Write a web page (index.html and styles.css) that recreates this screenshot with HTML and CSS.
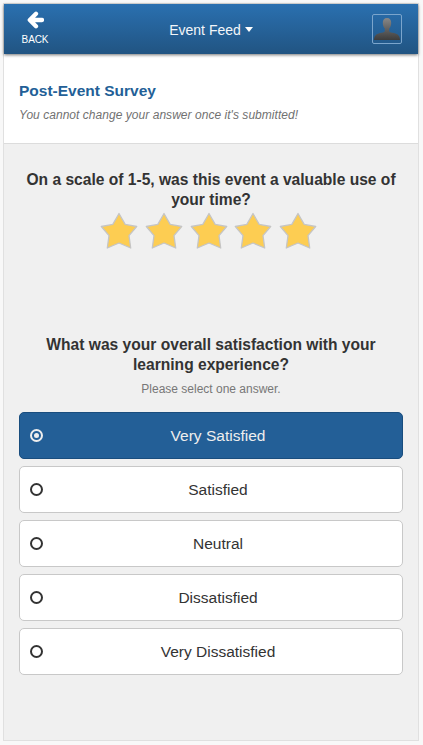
FILE: index.html
```
<!DOCTYPE html>
<html lang="en">
<head>
<meta charset="utf-8">
<title>Post-Event Survey</title>
<link rel="stylesheet" href="styles.css">
</head>
<body>
<div class="app">
  <header class="topbar">
    <a class="back">
      <svg width="17" height="18" viewBox="0 0 17 18"><path d="M9 2.800 2.800 9 9 15.200M4 9h11" fill="none" stroke="#fff" stroke-width="4.300" stroke-linecap="round" stroke-linejoin="round"/></svg>
      <span>BACK</span>
    </a>
    <div class="feed"><span>Event Feed</span><i class="caret"></i></div>
    <div class="avatar">
      <svg width="28" height="28" viewBox="0 0 28 28">
        <defs><linearGradient id="person" x1="0" y1="3" x2="0" y2="25" gradientUnits="userSpaceOnUse"><stop offset="0" stop-color="#888"/><stop offset="1" stop-color="#3c3c3c"/></linearGradient></defs>
        <path fill="url(#person)" d="M14 3c-3 0-4.300 2-4.200 5 .1 2.500.8 4.200 2 5.500v2.700c-.8 1.300-2.300 1.200-4.800 1.700C3 18.800 1 21 1 25h26c0-4-2-6.200-6-7.100-2.500-.5-4-.4-4.800-1.700v-2.700c1.200-1.300 1.900-3 2-5.500.1-3-1.200-5-4.200-5z"/>
      </svg>
    </div>
  </header>
  <section class="intro">
    <h1>Post-Event Survey</h1>
    <p>You cannot change your answer once it's submitted!</p>
  </section>
  <main class="survey">
    <section class="question rating">
      <h2>On a scale of 1-5, was this event a valuable use of<br>your time?</h2>
      <div class="stars">
        <svg class="star" viewBox="0 0 40 40"><path d="M20 2.500 26.200 13.400 37.700 15.500 30 24.600 31.700 37 20 32 8.300 37 10 24.600 2.300 15.500 13.800 13.400z"/></svg>
        <svg class="star" viewBox="0 0 40 40"><path d="M20 2.500 26.200 13.400 37.700 15.500 30 24.600 31.700 37 20 32 8.300 37 10 24.600 2.300 15.500 13.800 13.400z"/></svg>
        <svg class="star" viewBox="0 0 40 40"><path d="M20 2.500 26.200 13.400 37.700 15.500 30 24.600 31.700 37 20 32 8.300 37 10 24.600 2.300 15.500 13.800 13.400z"/></svg>
        <svg class="star" viewBox="0 0 40 40"><path d="M20 2.500 26.200 13.400 37.700 15.500 30 24.600 31.700 37 20 32 8.300 37 10 24.600 2.300 15.500 13.800 13.400z"/></svg>
        <svg class="star" viewBox="0 0 40 40"><path d="M20 2.500 26.200 13.400 37.700 15.500 30 24.600 31.700 37 20 32 8.300 37 10 24.600 2.300 15.500 13.800 13.400z"/></svg>
      </div>
    </section>
    <section class="question">
      <h2>What was your overall satisfaction with your<br>learning experience?</h2>
      <p class="hint">Please select one answer.</p>
      <div class="options">
        <div class="option selected"><i class="radio"></i><span>Very Satisfied</span></div>
        <div class="option"><i class="radio"></i><span>Satisfied</span></div>
        <div class="option"><i class="radio"></i><span>Neutral</span></div>
        <div class="option"><i class="radio"></i><span>Dissatisfied</span></div>
        <div class="option"><i class="radio"></i><span>Very Dissatisfied</span></div>
      </div>
    </section>
  </main>
</div>
</body>
</html>
```
FILE: styles.css
```
* { box-sizing: border-box; }
body {
  margin: 0;
  height: 745px;
  padding: 3px 4px 4px 3px;
  overflow: hidden;
  background: #f8f8f8;
  font-family: "Liberation Sans", Arial, sans-serif;
  font-size: 15.5px;
  color: #333;
}
h1, h2, p { margin: 0; }
.app {
  display: flex;
  flex-direction: column;
  height: 738px;
  border: 1px solid #e0e0e0;
  background: #f0f0f0;
}
.topbar {
  position: relative;
  display: grid;
  grid-template-columns: 62px 1fr 62px;
  height: 50px;
  flex: none;
  background: linear-gradient(#2a70b0, #215482);
  box-shadow: 0 1px 3px rgba(0, 0, 0, .55);
  color: #fff;
}
.back {
  display: flex;
  flex-direction: column;
  align-items: center;
  padding-top: 7px;
  font-size: 10px;
  line-height: 12px;
}
.back svg { display: block; margin-bottom: 5px; }
.back span { letter-spacing: -.1px; }
.feed {
  display: flex;
  align-items: center;
  justify-content: center;
  gap: 4px;
  padding-top: 2px;
  font-size: 14px;
  color: #f3f6f9;
}
.caret {
  border: 4px solid transparent;
  border-top: 5px solid #fff;
  border-bottom: 0;
  margin-bottom: 2px;
}
.avatar {
  width: 30px;
  height: 30px;
  margin: 10px 0 0 16px;
  border: 1px solid #7ba5cc;
  border-radius: 2px;
}
.avatar svg { display: block; }
.intro {
  height: 90px;
  flex: none;
  padding: 27px 15px 0;
  border-bottom: 1px solid #dcdcdc;
  background: #fff;
}
.intro h1 { font-size: 15.5px; line-height: 20px; color: #235f97; }
.intro p { margin-top: 6px; font-size: 12px; line-height: 16px; letter-spacing: .04px; font-style: italic; color: #717171; }
.survey { flex: 1; padding: 26px 15px 0; text-align: center; }
.question h2 { font-size: 15.6px; line-height: 20px; white-space: nowrap; }
.rating { height: 165px; }
.stars { display: flex; justify-content: center; gap: 4.8px; margin: 1px 5px 0 0; }
.star { width: 40px; height: 40px; flex: none; }
.star path { fill: #fdcd52; stroke: #c5c5c5; stroke-width: 1.3; stroke-linejoin: round; }
.hint { margin-top: 6px; font-size: 12px; line-height: 16px; color: #777; }
.options { display: flex; flex-direction: column; gap: 7px; margin-top: 15px; }
.option {
  display: grid;
  grid-template-columns: 14px 1fr;
  align-items: center;
  height: 47px;
  padding: 0 10px 0 10px;
  border: 1px solid #c8c8c8;
  border-radius: 5px;
  background: #fff;
}
.radio {
  display: grid;
  place-items: center;
  width: 13px;
  height: 13px;
  margin-bottom: 1px;
  border: 2px solid #333;
  border-radius: 50%;
}
.selected { border-color: #194d7e; background: #235f97; color: #eee; }
.selected .radio { border-color: #eee; }
.selected .radio::after { content: ""; width: 5px; height: 5px; border-radius: 50%; background: #eee; }
```
